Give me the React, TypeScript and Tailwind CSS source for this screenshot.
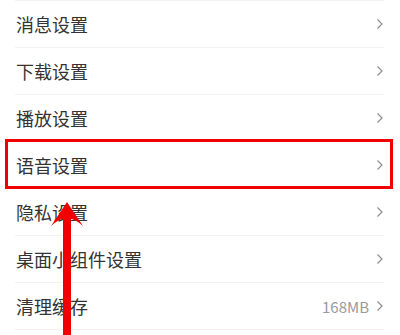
const rows: { label: string; value?: string }[] = [
  { label: "消息设置" },
  { label: "下载设置" },
  { label: "播放设置" },
  { label: "语音设置" },
  { label: "隐私设置" },
  { label: "桌面小组件设置" },
  { label: "清理缓存", value: "168MB" },
];

function Chevron() {
  return (
    <svg width="8" height="12" viewBox="0 0 8 12" className="shrink-0">
      <polyline points="1.5,1.5 6,6 1.5,10.5" fill="none" stroke="#8e8e8e" strokeWidth="1.2" />
    </svg>
  );
}

export default function App() {
  return (
    <div
      className="relative w-[400px] h-[335px] overflow-hidden bg-white"
      style={{ fontFamily: '"Noto Sans CJK SC", "Noto Sans", sans-serif' }}
    >
      <div className="ml-[15px] mr-[16px] border-t border-[#f2f2f2]">
        {rows.map((r) => (
          <div
            key={r.label}
            className="flex items-center justify-between h-[47px] border-b border-[#f2f2f2] pl-px"
          >
            <span className="text-[18px] text-[#333333] leading-none">{r.label}</span>
            <div className="flex items-center gap-[7px]">
              {r.value && <span className="text-[15px] text-[#9a9a9a] leading-none">{r.value}</span>}
              <Chevron />
            </div>
          </div>
        ))}
      </div>

      {/* highlight box */}
      <div className="absolute left-[5px] top-[139px] w-[388px] h-[50px] border-[3px] border-[#f00000]" />

      {/* arrow */}
      <svg className="absolute left-[48px] top-[200px]" width="40" height="135" viewBox="0 0 40 135">
        <path
          d="M19 2 L35 26 Q27 19 23 19 L23 135 L15 135 L15 19 Q11 19 3 26 Z"
          fill="#f00000"
        />
      </svg>
    </div>
  );
}
